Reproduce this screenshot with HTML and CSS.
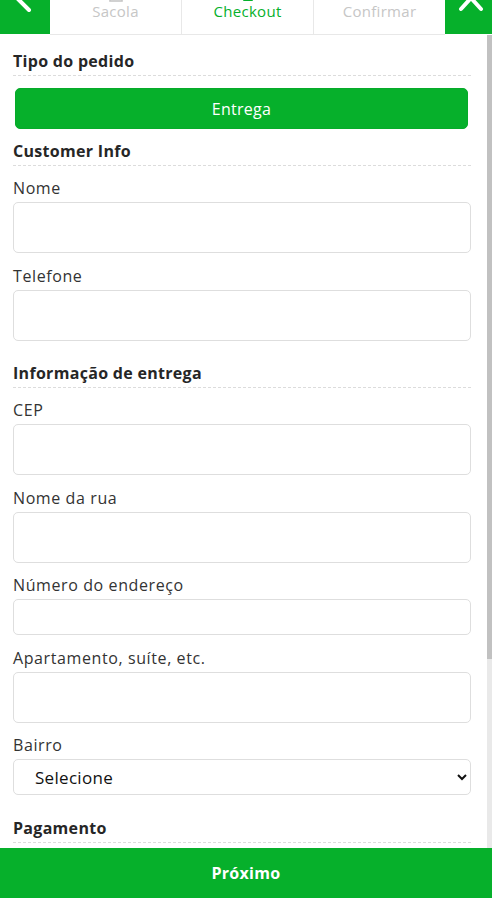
FILE: index.html
```html
<!DOCTYPE html>
<html lang="pt-BR">
<head>
  <meta charset="UTF-8">
  <meta name="viewport" content="width=device-width, initial-scale=1.0">
  <link rel="stylesheet" href="styles.css">
</head>
<body>
  <div class="app">

    <!-- etapas do pedido -->
    <header class="steps">
      <button class="nav-button nav-back" aria-label="Voltar">
        <svg viewBox="0 0 50 34" width="50" height="34">
          <polyline points="29,-12 18,-1 29,10" fill="none" stroke="#fff" stroke-width="4" stroke-linecap="round" stroke-linejoin="round"/>
        </svg>
      </button>

      <div class="step-tabs">
        <div class="step">
          <svg class="step-icon" viewBox="0 0 16 16" width="16" height="16">
            <rect x="2" y="5" width="12" height="10" fill="none" stroke="currentColor" stroke-width="1.6"/>
          </svg>
          <span>Sacola</span>
        </div>
        <div class="step active">
          <svg class="step-icon" viewBox="0 0 16 16" width="16" height="16">
            <rect x="3" y="4" width="10" height="11" rx="1" fill="currentColor"/>
          </svg>
          <span>Checkout</span>
        </div>
        <div class="step">
          <svg class="step-icon" viewBox="0 0 16 16" width="16" height="16">
            <circle cx="8" cy="7" r="6" fill="none" stroke="currentColor" stroke-width="1.6"/>
          </svg>
          <span>Confirmar</span>
        </div>
      </div>

      <button class="nav-button nav-close" aria-label="Fechar">
        <svg viewBox="0 0 47 34" width="47" height="34">
          <polyline points="16,9 26,-2 36,9" fill="none" stroke="#fff" stroke-width="4" stroke-linecap="round" stroke-linejoin="round"/>
        </svg>
      </button>
    </header>

    <div class="body-row">
      <main class="checkout">

        <section class="block">
          <h2 class="block-title">Tipo do pedido</h2>
          <button class="order-type">Entrega</button>
        </section>

        <section class="block">
          <h2 class="block-title">Customer Info</h2>
          <div class="field">
            <label class="field-label" for="nome">Nome</label>
            <input class="field-input" id="nome" type="text">
          </div>
          <div class="field">
            <label class="field-label" for="telefone">Telefone</label>
            <input class="field-input" id="telefone" type="tel">
          </div>
        </section>

        <section class="block">
          <h2 class="block-title">Informação de entrega</h2>
          <div class="field">
            <label class="field-label" for="cep">CEP</label>
            <input class="field-input" id="cep" type="text">
          </div>
          <div class="field">
            <label class="field-label" for="rua">Nome da rua</label>
            <input class="field-input" id="rua" type="text">
          </div>
          <div class="field">
            <label class="field-label" for="numero">Número do endereço</label>
            <input class="field-input small" id="numero" type="text">
          </div>
          <div class="field">
            <label class="field-label" for="apto">Apartamento, suíte, etc.</label>
            <input class="field-input" id="apto" type="text">
          </div>
          <div class="field">
            <label class="field-label" for="bairro">Bairro</label>
            <select class="field-select" id="bairro">
              <option>Selecione</option>
            </select>
          </div>
        </section>

        <section class="block">
          <h2 class="block-title">Pagamento</h2>
        </section>

      </main>

      <!-- barra de rolagem desenhada -->
      <div class="scroll-rail">
        <div class="scroll-thumb"></div>
      </div>
    </div>

    <footer class="footer">
      <button class="next-button">Próximo</button>
    </footer>

  </div>
</body>
</html>
```

FILE: styles.css
```css
body {
  margin: 0;
  height: 100vh;
  overflow: hidden;
  font-family: "Open Sans", "Noto Sans", sans-serif;
  color: #333;
  background-color: #fff;
}

.app {
  display: flex;
  flex-direction: column;
  height: 100vh;
}


/* cabeçalho com etapas */
.steps {
  display: flex;
  align-items: flex-start;
  height: 35px;
  flex-shrink: 0;
}

.nav-button {
  height: 34px;
  padding: 0;
  border: none;
  background-color: #06b02b;
  cursor: pointer;
  flex-shrink: 0;
}

.nav-button svg {
  display: block;
}

.nav-back {
  width: 50px;
}

.nav-close {
  width: 47px;
}

.step-tabs {
  flex: 1;
  display: flex;
  height: 35px;
  box-sizing: border-box;
  border-bottom: 1px solid #e8e8e8;
}

.step {
  flex: 1;
  display: flex;
  flex-direction: column;
  align-items: center;
  justify-content: flex-end;
  overflow: hidden;
  padding-bottom: 13px;
  color: #c6c6c6;
  font-size: 15px;
  letter-spacing: 0.3px;
  line-height: 20px;
  border-left: 1px solid #e8e8e8;
}

.step:first-child {
  border-left: none;
}

.step.active {
  color: #06b02b;
}

.step-icon {
  flex-shrink: 0;
  margin-bottom: -1px;
}


/* formulário */
.body-row {
  flex: 1;
  display: flex;
  min-height: 0;
}

.checkout {
  flex: 1;
  overflow: hidden;
  padding: 16px 16px 8px 13px;
}

.scroll-rail {
  width: 5px;
  flex-shrink: 0;
  background-color: #e9e9e9;
}

.scroll-thumb {
  height: 624px;
  background-color: #c1c1c1;
}

.block + .block {
  padding-top: 12px;
}

.block-title {
  margin: 0 0 10px 0;
  padding-bottom: 4px;
  font-size: 16px;
  font-weight: 700;
  letter-spacing: 0.3px;
  line-height: 20px;
  color: #262626;
  border-bottom: 1px dashed #dcdcdc;
}

.order-type {
  display: block;
  width: calc(100% - 5px);
  height: 41px;
  margin: 12px 3px 0 2px;
  border: 1px solid #06ab2a;
  border-radius: 5px;
  background-color: #06b02b;
  color: white;
  font-family: inherit;
  font-size: 16px;
  font-weight: 500;
  letter-spacing: 0.3px;
  cursor: pointer;
}

.field {
  margin-bottom: 10.5px;
}

.field-label {
  display: block;
  margin-bottom: 2px;
  font-size: 16px;
  letter-spacing: 0.6px;
  line-height: 24px;
  color: #333;
}

.field-input {
  display: block;
  width: 100%;
  height: 51px;
  box-sizing: border-box;
  border: 1px solid #dedede;
  border-radius: 5px;
  padding: 0 12px;
  font-family: inherit;
  font-size: 15px;
  background-color: #fff;
}

.field-input.small {
  height: 36px;
}

.field-select {
  display: block;
  width: 100%;
  height: 36px;
  box-sizing: border-box;
  border: 1px solid #dedede;
  border-radius: 5px;
  padding: 0 4px 0 17px;
  font-family: inherit;
  font-size: 17px;
  font-weight: 500;
  letter-spacing: 0.3px;
  color: #111;
  background-color: #fff;
}


/* rodapé */
.footer {
  flex-shrink: 0;
}

.next-button {
  display: block;
  width: 100%;
  height: 50px;
  border: none;
  background-color: #06b02b;
  color: white;
  font-family: inherit;
  font-size: 16px;
  font-weight: 700;
  letter-spacing: 0.3px;
  cursor: pointer;
}
```
